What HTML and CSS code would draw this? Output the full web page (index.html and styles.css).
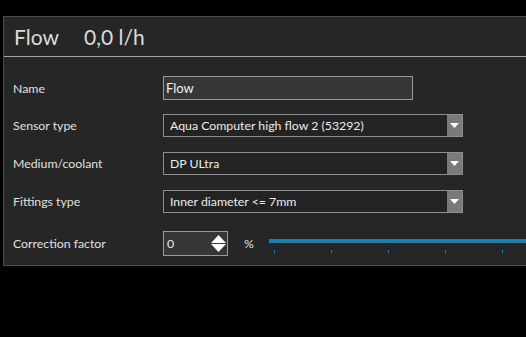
FILE: index.html
```html
<!DOCTYPE html>
<html>
<head>
<meta charset="utf-8">
<link rel="stylesheet" href="styles.css">
</head>
<body>
<div class="panel">
  <div class="header">
    <span class="title">Flow</span>
    <span class="value">0,0 l/h</span>
  </div>
  <div class="content">
    <div class="row row-name">
      <span class="label">Name</span>
      <div class="textbox">Flow</div>
    </div>
    <div class="row row-sel">
      <span class="label">Sensor type</span>
      <div class="select"><span class="sel-text">Aqua Computer high flow 2 (53292)</span><span class="sel-btn"><svg width="9" height="5" viewBox="0 0 9 5"><path d="M0 0H9L4.5 5Z" fill="#fff"/></svg></span></div>
    </div>
    <div class="row row-sel">
      <span class="label">Medium/coolant</span>
      <div class="select"><span class="sel-text">DP ULtra</span><span class="sel-btn"><svg width="9" height="5" viewBox="0 0 9 5"><path d="M0 0H9L4.5 5Z" fill="#fff"/></svg></span></div>
    </div>
    <div class="row row-sel">
      <span class="label">Fittings type</span>
      <div class="select"><span class="sel-text">Inner diameter &lt;= 7mm</span><span class="sel-btn"><svg width="9" height="5" viewBox="0 0 9 5"><path d="M0 0H9L4.5 5Z" fill="#fff"/></svg></span></div>
    </div>
    <div class="row row-corr">
      <span class="label">Correction factor</span>
      <div class="spin"><span class="spin-text">0</span><svg class="spin-arrows" width="15" height="17" viewBox="0 0 15 17"><path d="M7.5 0L15 8H0Z M0 9H15L7.5 17Z" fill="#fff"/></svg></div>
      <span class="pct">%</span>
      <div class="slider">
        <div class="track"></div>
        <div class="ticks"><i></i><i></i><i></i><i></i><i></i></div>
      </div>
    </div>
  </div>
</div>
</body>
</html>
```
FILE: styles.css
```css
html, body {
  margin: 0;
  padding: 0;
  background: #000;
  overflow: hidden;
}
body {
  width: 526px;
  height: 337px;
  font-family: "Lato", "Noto Sans", sans-serif;
  color: #e6e6e6;
}
.panel {
  margin-top: 16px;
  margin-left: 3px;
  width: 523px;
  height: 250px;
  background: #262626;
  border-left: 1px solid #4a4a4a;
  border-top: 1px solid #4a4a4a;
  border-bottom: 1px solid #4a4a4a;
  box-sizing: border-box;
}
.header {
  height: 39px;
  border-bottom: 1px solid #a8a8a8;
  display: flex;
  align-items: center;
  padding-left: 10px;
  font-size: 21px;
  color: #dcdcdc;
}
.title {
  width: 70px;
}
.content {
  padding-left: 9px;
  padding-top: 19px;
  font-size: 12.3px;
}
.row {
  display: flex;
  align-items: center;
}
.label {
  width: 150px;
  flex: none;
  color: #e0e0e0;
}
.row-sel { margin-top: 14px; }
.row-sel + .row-sel { margin-top: 15px; }
.row-corr { margin-top: 18px; }
.textbox {
  width: 250px;
  height: 24px;
  box-sizing: border-box;
  border: 1px solid #9a9a9a;
  background: #363636;
  padding-left: 2px;
  line-height: 22px;
  color: #f0f0f0;
  font-size: 13px;
}
.select {
  width: 300px;
  height: 23px;
  box-sizing: border-box;
  border: 1px solid #8e8e8e;
  background: #232323;
  display: flex;
}
.sel-text {
  flex: 1;
  padding-left: 6px;
  line-height: 21px;
  color: #ececec;
}
.sel-btn {
  width: 15px;
  background: #7a7a7a;
  display: flex;
  align-items: center;
  justify-content: center;
}
.spin {
  width: 65px;
  height: 25px;
  box-sizing: border-box;
  border: 1px solid #9a9a9a;
  background: #363636;
  display: flex;
  align-items: center;
  justify-content: space-between;
  padding-left: 3px;
  padding-right: 1px;
}
.spin-text { color: #e8e8e8; }
.pct {
  margin-left: 16px;
  width: 25px;
  color: #e0e0e0;
}
.slider {
  flex: 1;
  display: flex;
  flex-direction: column;
  padding-top: 4px;
}
.track {
  height: 4px;
  background: #1a80b4;
}
.ticks {
  display: flex;
  gap: 56px;
  padding-left: 5px;
  margin-top: 7px;
}
.ticks i {
  display: block;
  width: 1px;
  height: 3px;
  background: #1a80b4;
}
```
